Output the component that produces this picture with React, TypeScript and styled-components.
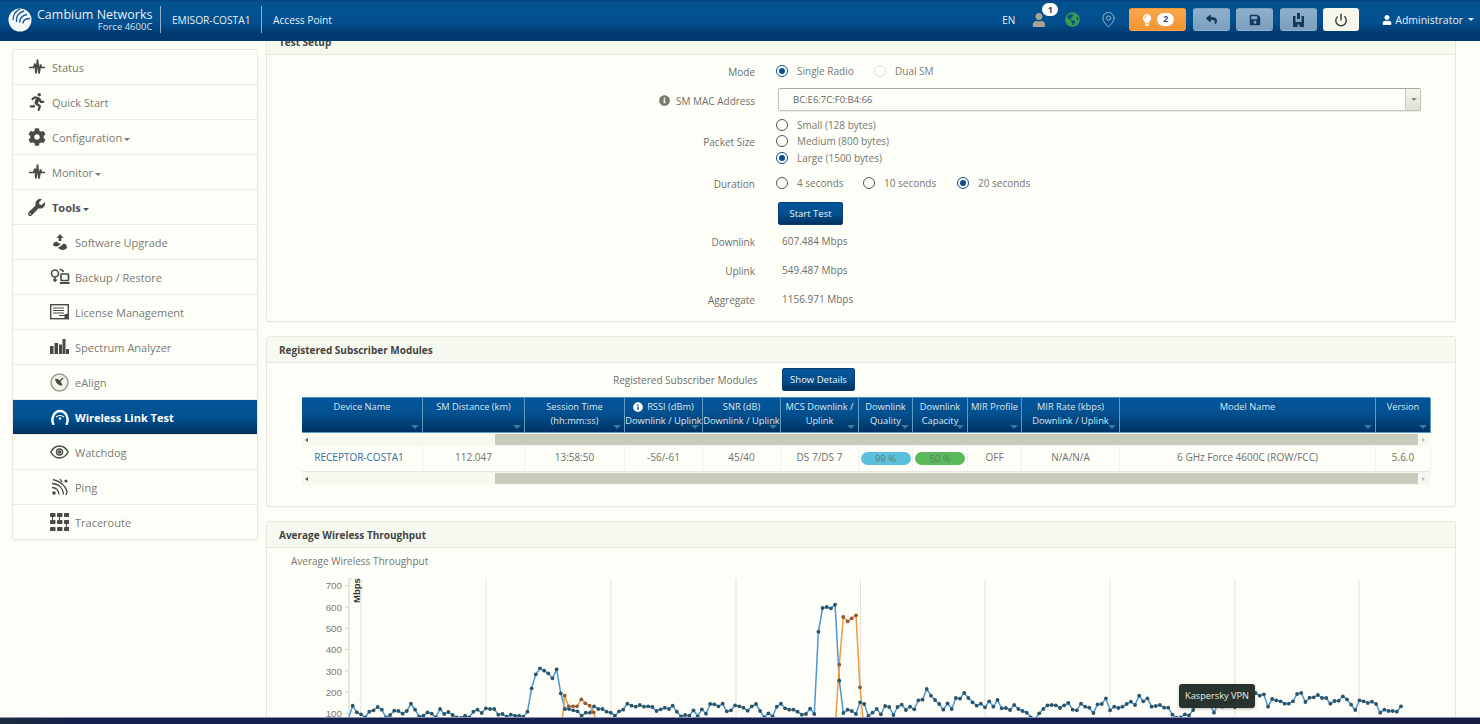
import React from "react";
import styled, { createGlobalStyle } from "styled-components";
import { FaCog, FaWrench, FaRunning, FaGlobeAmericas, FaLightbulb, FaReply, FaSave, FaUser, FaInfoCircle } from "react-icons/fa";
import { MapPin, Power } from "lucide-react";

const Global = createGlobalStyle`
  html, body { margin: 0; padding: 0; height: 724px; overflow: hidden; background: #fefef8; }
  * { box-sizing: border-box; }
  body { font-family: "Open Sans", "Liberation Sans", sans-serif; color: #6f6f6a; }
`;

const Page = styled.div`
  position: relative; width: 1480px; height: 724px; display: flex; flex-direction: column; overflow: hidden;
`;
const Header = styled.header`
  position: relative; z-index: 2; height: 41px; flex: none; display: flex; align-items: center; padding: 0 6px 2px 8px;
  background: linear-gradient(#003f7c 0, #02528f 2px, #03508f 22px, #003d74 32px, #003a6e 100%);
  color: #e6eef4;
`;
const Brand = styled.div`display: flex; align-items: center; gap: 5px;`;
const BrandText = styled.div`display: flex; flex-direction: column; align-items: flex-end; padding-top: 1px;`;
const BrandName = styled.div`font-size: 12.5px; line-height: 13px; color: #e8eef4; white-space: nowrap;`;
const BrandModel = styled.div`font-size: 9.5px; line-height: 11px; color: #d6e2ec; white-space: nowrap;`;
const HeadDivider = styled.div`width: 1px; height: 27px; background: #8fb0cb; margin: 0 10.5px 0 8px;`;
const HeadLabel = styled.div`font-size: 10.2px; font-weight: 500; white-space: nowrap; padding-right: 3px;`;
const HeadRight = styled.div`margin-left: auto; display: flex; align-items: center;`;
const Lang = styled.div`font-size: 10px; margin-right: 17px;`;
const IconSlot = styled.div<{ $w: number; $mr: number; $c: string }>`
  position: relative; width: ${p => p.$w}px; margin-right: ${p => p.$mr}px; color: ${p => p.$c};
  display: flex; align-items: center; justify-content: center; height: 20px;
  svg { flex: none; }
`;
const Badge = styled.span`
  position: absolute; left: 10px; top: -7px; width: 16px; height: 13px; border-radius: 7px; background: #fff;
  color: #24456a; font-size: 9px; font-weight: 700; line-height: 13px; text-align: center;
`;
const HeadButton = styled.button<{ $kind: "orange" | "steel" | "white" }>`
  height: 23px; width: ${p => (p.$kind === "orange" ? 57 : p.$kind === "white" ? 36 : 37)}px;
  margin-right: ${p => (p.$kind === "white" ? 23 : 6.5)}px; padding: 0; border: 1px solid transparent; border-radius: 3px;
  display: flex; align-items: center; justify-content: center; gap: 4px;
  background: ${p => (p.$kind === "orange" ? "linear-gradient(#f9a84b,#f39534)" : p.$kind === "white" ? "#f7f6ec" : "linear-gradient(#8fb0cc,#7c9fbf)")};
  color: ${p => (p.$kind === "orange" ? "#fff" : p.$kind === "white" ? "#3a3a36" : "#123a5e")};
`;
const CountPill = styled.span`
  width: 17px; height: 13px; border-radius: 7px; background: #fff; color: #24456a; font-size: 9px; font-weight: 700; line-height: 13px; text-align: center;
`;
const UserMenu = styled.div`display: flex; align-items: center; gap: 3px; font-size: 10.5px; color: #e6eef4;`;
const Caret = styled.i<{ $c?: string }>`
  display: inline-block; width: 0; height: 0; margin-left: 2px; vertical-align: middle;
  border-left: 3px solid transparent; border-right: 3px solid transparent; border-top: 3px solid ${p => p.$c || "currentColor"};
`;

const Body = styled.div`flex: 1; min-height: 0; display: flex; overflow: hidden; align-items: flex-start;`;
const Sidebar = styled.nav`
  flex: none; width: 246px; margin: 8px 0 0 12px; border: 1px solid #e8e8de; border-radius: 3px; background: #fefef8;
  box-shadow: 0 1px 2px rgba(0,0,0,.05);
`;
const NavRow = styled.div<{ $sub?: boolean; $active?: boolean; $bold?: boolean }>`
  height: 35px; display: flex; align-items: center; gap: 5px;
  padding-left: ${p => (p.$sub ? 36 : 13)}px; border-bottom: 1px solid #eaeae0;
  background: ${p => (p.$active ? "linear-gradient(#03559c 0,#03508f 55%,#00305f 100%)" : "transparent")};
  color: ${p => (p.$active ? "#fff" : p.$bold ? "#4c4c56" : "#7a7a74")};
  font-size: 11px; font-weight: ${p => (p.$active || p.$bold ? 700 : 400)};
  &:last-child { border-bottom: none; height: 34px; }
`;
const NavIcon = styled.span<{ $active?: boolean }>`
  width: 21px; height: 20px; flex: none; display: flex; align-items: center; justify-content: center;
  color: ${p => (p.$active ? "#fff" : "#4a4a45")};
  svg { display: block; }
`;
const NavText = styled.span`padding-top: 1px; white-space: nowrap;`;

const Main = styled.main`flex: none; width: 1190px; margin: -13px 0 0 8px;`;
const Panel = styled.section`
  border: 1px solid #e8e8de; border-radius: 3px; margin-bottom: 14px; background: #fefef8; box-shadow: 0 1px 1px rgba(0,0,0,.03);
`;
const PanelHead = styled.h3`
  margin: 0; height: 26px; padding: 0 12px; background: #f6f9ef; border-bottom: 1px solid #e8e8de;
  font-size: 10px; font-weight: 700; line-height: 27px; color: #444;
`;
const FormBody = styled.div`padding-bottom: 8px;`;
const FormRow = styled.div<{ $h: number }>`
  height: ${p => p.$h}px; display: grid; grid-template-columns: 488px 1fr; column-gap: 21px; align-items: center;
`;
const FormLabel = styled.div`
  display: flex; justify-content: flex-end; align-items: center; gap: 6px; font-size: 10px; color: #6f6f6a; padding-top: 2px; white-space: nowrap;
`;
const InlineRadios = styled.div`display: flex; align-items: center;`;
const StackRadios = styled.div`display: flex; flex-direction: column; gap: 0;`;
const RadioWrap = styled.label<{ $w?: number; $muted?: boolean }>`
  display: flex; align-items: center; height: 16.5px; font-size: 10px; white-space: nowrap; width: ${p => (p.$w ? `${p.$w}px` : "auto")};
  color: ${p => (p.$muted ? "#7c7c78" : "#777772")};
`;
const Radio = styled.span<{ $on?: boolean; $off?: boolean }>`
  width: 12px; height: 12px; flex: none; border-radius: 50%; margin-right: 9px; background: #fefef8;
  border: 1.5px solid ${p => (p.$off ? "#dfdfd8" : p.$on ? "#0a4f8f" : "#555")};
  display: flex; align-items: center; justify-content: center;
  &::after { content: ""; width: 6px; height: 6px; border-radius: 50%; background: ${p => (p.$on ? "#0a4f8f" : "transparent")}; }
`;
const Select = styled.div`
  width: 643px; height: 23px; margin-left: 2px; display: flex; align-items: center; justify-content: space-between; font-size: 9.5px; color: #66665f;
  border: 1px solid #c4c4ba; border-top-color: #a8a8a0; border-radius: 2px; padding-left: 14px; box-shadow: 0 1px 1px rgba(0,0,0,.08);
`;
const SelectArrow = styled.div`
  width: 15px; height: 100%; border-left: 1px solid #ccc; background: linear-gradient(#f5f5ec,#dedfd4); display: flex; align-items: center; justify-content: center; color: #888;
`;
const PrimaryButton = styled.button<{ $w: number }>`
  width: ${p => p.$w}px; height: 23px; padding: 0; border: 1px solid #0a3e70; border-radius: 2px; flex: none;
  background: linear-gradient(#04569c 0,#03508f 50%,#00305f 100%); color: #eef3f8; font: 500 9.5px "Open Sans", sans-serif;
`;
const ButtonCell = styled.div`display: flex; align-self: start; padding: 5px 0 0 2px;`;
const MetricValue = styled.div`font-size: 10px; color: #6f6f6a; padding-left: 6px;`;

const TableBody = styled.div`padding: 5px 25px 21px 35px;`;
const TableCaption = styled.div`
  display: flex; align-items: center; justify-content: flex-start; height: 23px; margin-bottom: 6px; padding-left: 311px; font-size: 10px; color: #6f6f6a;
`;
const CaptionText = styled.span`width: 169px; white-space: nowrap;`;
const COLS = "121px 102px 100px 78px 78px 78px 54px 55px 54px 98px 256px 55px";
const HeadGrid = styled.div`
  display: grid; grid-template-columns: ${COLS}; height: 36px; background: linear-gradient(#03559c 0,#03508f 45%,#003060 100%);
  border-top: 1px solid #4f95bf;
`;
const HeadCell = styled.div`
  position: relative; padding-top: 2px; text-align: center; font-size: 9.3px; line-height: 14px; color: #dce7ef; white-space: nowrap;
  border-right: 1px solid #5d9bc3; border-bottom: 1px solid #5d9bc3;
  &::after {
    content: ""; position: absolute; right: 3px; bottom: 3px; width: 0; height: 0;
    border-left: 4px solid transparent; border-right: 4px solid transparent; border-top: 4px solid #3c78a6;
  }
  svg { vertical-align: -1.5px; margin-right: 4px; }
`;
const ScrollBar = styled.div`height: 13px; display: flex; background: #f6f9ef;`;
const ScrollEnd = styled.div<{ $w: number; $right?: boolean }>`
  width: ${p => p.$w}px; flex: none; display: flex; align-items: center; padding-left: ${p => (p.$right ? 4 : 3)}px; 
  &::before {
    content: ""; width: 0; height: 0; border-top: 2.5px solid transparent; border-bottom: 2.5px solid transparent;
    ${p => (p.$right ? "border-left: 3px solid #bbb;" : "border-right: 3px solid #555;")}
  }
`;
const ScrollThumb = styled.div`flex: 1; margin: 1px 0; background: #c8cabb;`;
const DataGrid = styled.div`
  display: grid; grid-template-columns: ${COLS}; height: 26px; border-bottom: 1px solid #e8e8de;
`;
const DataCell = styled.div<{ $link?: boolean }>`
  display: flex; align-items: center; justify-content: center; font-size: 10px; color: ${p => (p.$link ? "#2f6d9e" : "#6f6f6a")}; white-space: nowrap;
  border-right: 1px dotted #e6e6dc; padding: 0 ${p => (p.$link ? 6 : 0)}px 3px 0;
`;
const Pill = styled.span<{ $c: string }>`
  width: 50px; height: 13px; border-radius: 7px; background: ${p => p.$c}; color: #5d7a70; font-size: 9.5px; line-height: 13px; text-align: center; margin-top: 3px;
`;
const ChartBody = styled.div`overflow: hidden;`;
const ChartTitle = styled.div`height: 26px; padding: 1px 0 0 24px; font-size: 10px; line-height: 25px; color: #777772;`;
const ChartSvg = styled.svg`display: block; font-family: "Liberation Sans", Arial, sans-serif;`;

const Taskbar = styled.div`
  position: relative; z-index: 3; flex: none; height: 7px; border-top: 1px solid #8f8fb0;
  background: linear-gradient(90deg,#1c2c3a 0,#14204e 5%,#14204e 80%,#1a1c44 100%);
`;
const Tooltip = styled.div`
  position: absolute; z-index: 4; left: 1179px; top: 684px; width: 76px; height: 24px; border-radius: 3px; background: #28332f;
  color: #e8ebe4; font-size: 9.2px; line-height: 24px; text-align: center; white-space: nowrap; box-shadow: 0 1px 3px rgba(0,0,0,.25);
`;

const Pulse = ({ s = 16 }: { s?: number }) => (
  <svg width={s} height={s} viewBox="0 0 16 16" fill="none" stroke="currentColor" strokeWidth="1.7">
    <path d="M0 8.500h4.500L6 4.500l1 10L8.500 .5l1.500 14 1.500-9 1 3H16" />
  </svg>
);
const Upgrade = () => (
  <svg width="16" height="17" viewBox="0 0 16 17" fill="currentColor">
    <path d="M8 0l3.500 4H9.300v3H6.700V4H4.500z" />
    <path d="M5 7.500c-2 .4-4 1.500-4 3 0 1.200 1.500 2 3 2 2.500 0 3-1.500 5-2.500-1.500-.6-3.500-.6-4-2.500zM15 13c0-1.600-1.500-3-3-3.500-2.500 1-3 3.500-6 4 1 1.500 2.500 2.500 4.500 2.500 2.300 0 4.500-1 4.500-3z" />
  </svg>
);
const Backup = () => (
  <svg width="20" height="18" viewBox="0 0 20 18" fill="none" stroke="currentColor" strokeWidth="1.6">
    <circle cx="5" cy="5.500" r="3.500" /><path d="M5 9v5M3 12h4" />
    <rect x="11" y="6" width="7.500" height="6.500" rx=".5" /><path d="M10 15h9.500" strokeWidth="2" />
    <path d="M9.500 1.500c2 0 3.500 1 4 2.500" />
  </svg>
);
const License = () => (
  <svg width="19" height="16" viewBox="0 0 19 16" fill="none" stroke="currentColor">
    <rect x=".7" y=".7" width="17.600" height="14" strokeWidth="1.400" />
    <path d="M3 4h11M3 6.500h11M3 9h11M9 11.500h6" strokeWidth="1.200" />
    <path d="M15 10.500h3v4h-3z" fill="currentColor" />
  </svg>
);
const Bars = () => (
  <svg width="19" height="16" viewBox="0 0 19 16" fill="currentColor">
    <rect x="0" y="7" width="3.500" height="8" /><rect x="4.500" y="4" width="3.500" height="11" />
    <rect x="9" y="5.500" width="3" height="9.500" /><rect x="12.500" y="0" width="3" height="15" /><rect x="16" y="10" width="3" height="5" />
  </svg>
);
const EAlign = () => (
  <svg width="19" height="19" viewBox="0 0 19 19">
    <circle cx="9.500" cy="9.500" r="8.500" fill="#f2f2ea" stroke="#9a9a92" strokeWidth="1.500" />
    <path d="M5 6c3-1 6 2 7.500 6.500C9 13 5.500 10 5 6z" fill="#4a4a45" />
    <path d="M10 8l3-3" stroke="#4a4a45" strokeWidth="1.300" />
  </svg>
);
const Gauge = () => (
  <svg width="20" height="16" viewBox="0 0 20 16" fill="none" stroke="currentColor" strokeWidth="2.400">
    <path d="M3.300 15C1 10.500 3.500 2 10 2s9 8.500 6.700 13" strokeLinecap="round" />
    <path d="M6 8c2-2 6-2 8 0" strokeWidth="1.200" />
    <circle cx="10" cy="9.500" r="1.300" fill="currentColor" stroke="none" />
  </svg>
);
const Eye = () => (
  <svg width="19" height="14" viewBox="0 0 19 14" fill="none" stroke="currentColor" strokeWidth="1.400">
    <path d="M.8 7C3 3 6 1 9.500 1s6.500 2 8.700 6c-2.200 4-5.200 6-8.700 6S3 11 .8 7z" />
    <circle cx="9.500" cy="7" r="3" /><circle cx="9.500" cy="7" r="1" fill="currentColor" />
  </svg>
);
const Ping = () => (
  <svg width="18" height="18" viewBox="0 0 18 18" fill="none" stroke="currentColor" strokeWidth="1.300">
    <circle cx="3" cy="15" r="1.800" fill="currentColor" stroke="none" />
    <path d="M1 9.500c3.500 0 6.500 2.500 7 7M1 5.500c6 0 11 4 11.500 11M2 1.500c6 1.500 12 5 14 12l-1 3.500" />
    <circle cx="15" cy="3" r="1.600" fill="currentColor" stroke="none" />
    <path d="M9 1l2 3" />
  </svg>
);
const Trace = () => (
  <svg width="19" height="18" viewBox="0 0 19 18" fill="currentColor">
    {[0, 1, 2].flatMap(r => [0, 1, 2].map(c => <rect key={`${r}${c}`} x={c * 7} y={r * 7} width="5.500" height="4" rx=".8" />))}
    <path d="M2 4h1v3H2zM9 4h1v3H9zM16 11h1v3h-1z" />
  </svg>
);
const Logo = () => (
  <svg width="24" height="24" viewBox="0 0 24 24" fill="none">
    <circle cx="12" cy="12" r="11.500" fill="#f4f7f9" />
    <path d="M5 12C5 7 8 3 12 1M8.500 14C7.500 9 10.500 4.500 16 3M12 14.500c-1-3 1.500-7 7-8M15 15.500c0-2.500 2-5 7-5" stroke="#0a5596" strokeWidth="1.300" />
  </svg>
);
const Pillar = () => (
  <svg width="13" height="14" viewBox="0 0 13 14" fill="currentColor">
    <path d="M5 0h3v6H5zM1 3h2.500v11H1zM9.500 3H12v11H9.500zM3.500 9h6v5h-2v-2.500h-2V14h-2z" />
  </svg>
);

type NavItem = { label: string; icon: React.ReactNode; sub?: boolean; caret?: boolean; bold?: boolean; active?: boolean };
const nav: NavItem[] = [
  { label: "Status", icon: <Pulse /> },
  { label: "Quick Start", icon: <FaRunning size={18} /> },
  { label: "Configuration", icon: <FaCog size={18} />, caret: true },
  { label: "Monitor", icon: <Pulse />, caret: true },
  { label: "Tools", icon: <FaWrench size={17} />, caret: true, bold: true },
  { label: "Software Upgrade", icon: <Upgrade />, sub: true },
  { label: "Backup / Restore", icon: <Backup />, sub: true },
  { label: "License Management", icon: <License />, sub: true },
  { label: "Spectrum Analyzer", icon: <Bars />, sub: true },
  { label: "eAlign", icon: <EAlign />, sub: true },
  { label: "Wireless Link Test", icon: <Gauge />, sub: true, active: true },
  { label: "Watchdog", icon: <Eye />, sub: true },
  { label: "Ping", icon: <Ping />, sub: true },
  { label: "Traceroute", icon: <Trace />, sub: true },
];

const headers: React.ReactNode[][] = [
  ["Device Name"], ["SM Distance (km)"], ["Session Time", "(hh:mm:ss)"],
  [<><FaInfoCircle size={10} color="#fff" />RSSI (dBm)</>, "Downlink / Uplink"], ["SNR (dB)", "Downlink / Uplink"],
  ["MCS Downlink /", "Uplink"], ["Downlink", "Quality"], ["Downlink", "Capacity"], ["MIR Profile"],
  ["MIR Rate (kbps)", "Downlink / Uplink"], ["Model Name"], ["Version"],
];

// Chart data: screen-space samples read from the plot, one list per stretch of the x axis.
const stretch = (x0: number, x1: number, base: number, ys: number[]) =>
  ys.map((y, i) => [x0 + ((x1 - x0) * i) / (ys.length - 1), base + y / 3] as [number, number]);

const blue: [number, number][] = [
  [349, 718],
  ...stretch(270 + 248 / 3, 270 + 1197 / 3, 550, [470,490,496,505,488,484,474,482,505,498,485,486,494,486,464,482,503,500,490,494,505,480,495,489,498,505,507,500,505,488,482,492,478,480,480,497,495,503,497,500,500,503,488,418,376,358,365,373,388,361,433,480,480,484,487,500,491,491,472,480,480,488,491,500,487,482,464,470,473,468,473,472,474,486,481,476,480]),
  ...stretch(670 + 8 / 3, 670 + 1195 / 3, 570, [410,428,442,438,440,424,442,421,434,405,406,412,404,427,424,409,412,416,425,412,405,426,445,433,442,413,404,418,422,422,428,437,435,419,435,188,117,114,118,107,335,432,422,426,435,400,405,441,431,420,436,411,414,438,414,407,423,413,421,394,392,360,380,393,405,422,403,420,387,389,372,387,400,410,404,415,397,413,393,418,417,423,408,420,426,431,445,450,433,420,409,408,409,417,409,402]),
  ...stretch(1070 + 8 / 3, 1070 + 993 / 3, 570, [422,424,404,413,416,432,406,405,388,424,413,417,413,405,398,408,380,397,388,413,411,408,416,416,437,447,445,436,439,423,400,390,395,405,431,405,413,405,400,414,410,412,410,395,372,380,376,413,390,394,397,404,404,397,375,372,399,386,385,378,387,387,404,396,395,382,391,407,423,394,397,402,398,405,431,422,426,426,428,412]),
];
const orangeA: [number, number][] = [
  [562.3, 720], [564.7, 696.7], [568.7, 707.3], [573, 707.3], [577, 707.3], [581.3, 700.3], [585.3, 704.3], [589.7, 706.7], [593.7, 713.3], [596, 722],
];
const orangeB: [number, number][] = [
  [835.7, 720], [839.3, 665.7], [843.3, 618], [847.7, 622.3], [851.7, 619.3], [856, 616.3], [860, 688.3], [863, 720],
];
const dotsOnly = (pts: [number, number][]) => pts.slice(1, -1);
const toPath = (pts: [number, number][]) => pts.map(([x, y]) => `${x.toFixed(1)},${y.toFixed(1)}`).join(" ");

const yTicks = [700, 600, 500, 400, 300, 200, 100];
const grid = [361, 486, 611, 736, 860.5, 985, 1110, 1235, 1359];

const Chart = () => (
  <ChartSvg width="1188" height="145" viewBox="267 575 1188 145">
    {grid.map(x => <line key={x} x1={x} x2={x} y1="580" y2="720" stroke="#e4e4dc" strokeWidth="1" />)}
    <path d="M352 580h-3v140" fill="none" stroke="#d4d4cc" strokeWidth="1" />
    {yTicks.map((t, i) => (
      <g key={t}>
        <line x1="345" x2="349" y1={586.700 + i * 21.300} y2={586.700 + i * 21.300} stroke="#d4d4cc" />
        <text x="342" y={590.400 + i * 21.300} textAnchor="end" fontSize="9.800" fill="#7a7a7d">{t}</text>
      </g>
    ))}
    <text transform="translate(360 604) rotate(-90)" fontSize="9.500" fontWeight="700" fill="#333">Mbps</text>
    <polyline points={toPath(blue)} fill="none" stroke="#4a97cf" strokeWidth="1.500" />
    <polyline points={toPath(orangeA)} fill="none" stroke="#f09a3e" strokeWidth="1.500" />
    <polyline points={toPath(orangeB)} fill="none" stroke="#f09a3e" strokeWidth="1.500" />
    {blue.slice(1).map(([x, y], i) => <circle key={i} cx={x} cy={y} r="1.900" fill="#2c5468" />)}
    {[...dotsOnly(orangeA), ...dotsOnly(orangeB)].map(([x, y], i) => <circle key={i} cx={x} cy={y} r="1.900" fill="#8f5a35" />)}
  </ChartSvg>
);

export default function App() {
  return (
    <Page>
      <Global />
      <Header>
        <Brand>
          <Logo />
          <BrandText>
            <BrandName>Cambium Networks</BrandName>
            <BrandModel>Force 4600C</BrandModel>
          </BrandText>
        </Brand>
        <HeadDivider />
        <HeadLabel>EMISOR-COSTA1</HeadLabel>
        <HeadDivider />
        <HeadLabel>Access Point</HeadLabel>
        <HeadRight>
          <Lang>EN</Lang>
          <IconSlot $w={14} $mr={19} $c="#a8a48f"><FaUser size={14} /><Badge>1</Badge></IconSlot>
          <IconSlot $w={15} $mr={19.5} $c="#3f9a52"><FaGlobeAmericas size={15} /></IconSlot>
          <IconSlot $w={17} $mr={12.5} $c="#9ab4c6"><MapPin size={17} strokeWidth={1.400} /></IconSlot>
          <HeadButton $kind="orange"><FaLightbulb size={12} /><CountPill>2</CountPill></HeadButton>
          <HeadButton $kind="steel"><FaReply size={11} /></HeadButton>
          <HeadButton $kind="steel"><FaSave size={12} /></HeadButton>
          <HeadButton $kind="steel"><Pillar /></HeadButton>
          <HeadButton $kind="white"><Power size={14} strokeWidth={2.400} /></HeadButton>
          <UserMenu><FaUser size={10} color="#fff" />Administrator<Caret /></UserMenu>
        </HeadRight>
      </Header>
      <Body>
        <Sidebar>
          {nav.map(n => (
            <NavRow key={n.label} $sub={n.sub} $active={n.active} $bold={n.bold}>
              <NavIcon $active={n.active}>{n.icon}</NavIcon>
              <NavText>{n.label}{n.caret && <Caret />}</NavText>
            </NavRow>
          ))}
        </Sidebar>
        <Main>
          <Panel>
            <PanelHead>Test Setup</PanelHead>
            <FormBody>
              <FormRow $h={31}>
                <FormLabel>Mode</FormLabel>
                <InlineRadios>
                  <RadioWrap $w={98}><Radio $on />Single Radio</RadioWrap>
                  <RadioWrap $muted><Radio $off />Dual SM</RadioWrap>
                </InlineRadios>
              </FormRow>
              <FormRow $h={27}>
                <FormLabel><FaInfoCircle size={11} color="#77776f" />SM MAC Address</FormLabel>
                <Select>BC:E6:7C:F0:B4:66<SelectArrow><Caret /></SelectArrow></Select>
              </FormRow>
              <FormRow $h={56}>
                <FormLabel>Packet Size</FormLabel>
                <StackRadios>
                  <RadioWrap><Radio />Small (128 bytes)</RadioWrap>
                  <RadioWrap><Radio />Medium (800 bytes)</RadioWrap>
                  <RadioWrap><Radio $on />Large (1500 bytes)</RadioWrap>
                </StackRadios>
              </FormRow>
              <FormRow $h={28}>
                <FormLabel>Duration</FormLabel>
                <InlineRadios>
                  <RadioWrap $w={87}><Radio />4 seconds</RadioWrap>
                  <RadioWrap $w={94}><Radio />10 seconds</RadioWrap>
                  <RadioWrap><Radio $on />20 seconds</RadioWrap>
                </InlineRadios>
              </FormRow>
              <FormRow $h={29}>
                <div />
                <ButtonCell><PrimaryButton $w={65}>Start Test</PrimaryButton></ButtonCell>
              </FormRow>
              <FormRow $h={29}><FormLabel>Downlink</FormLabel><MetricValue>607.484 Mbps</MetricValue></FormRow>
              <FormRow $h={29}><FormLabel>Uplink</FormLabel><MetricValue>549.487 Mbps</MetricValue></FormRow>
              <FormRow $h={29}><FormLabel>Aggregate</FormLabel><MetricValue>1156.971 Mbps</MetricValue></FormRow>
            </FormBody>
          </Panel>
          <Panel>
            <PanelHead>Registered Subscriber Modules</PanelHead>
            <TableBody>
              <TableCaption>
                <CaptionText>Registered Subscriber Modules</CaptionText>
                <PrimaryButton $w={73}>Show Details</PrimaryButton>
              </TableCaption>
              <HeadGrid>
                {headers.map((h, i) => (
                  <HeadCell key={i}>{h.map((l, j) => <div key={j}>{l}</div>)}</HeadCell>
                ))}
              </HeadGrid>
              <ScrollBar><ScrollEnd $w={193} /><ScrollThumb /><ScrollEnd $w={12} $right /></ScrollBar>
              <DataGrid>
                <DataCell $link>RECEPTOR-COSTA1</DataCell>
                <DataCell>112.047</DataCell>
                <DataCell>13:58:50</DataCell>
                <DataCell>-56/-61</DataCell>
                <DataCell>45/40</DataCell>
                <DataCell>DS 7/DS 7</DataCell>
                <DataCell><Pill $c="#5bc0de">99 %</Pill></DataCell>
                <DataCell><Pill $c="#5cb85c">50 %</Pill></DataCell>
                <DataCell>OFF</DataCell>
                <DataCell>N/A/N/A</DataCell>
                <DataCell>6 GHz Force 4600C (ROW/FCC)</DataCell>
                <DataCell>5.6.0</DataCell>
              </DataGrid>
              <ScrollBar><ScrollEnd $w={193} /><ScrollThumb /><ScrollEnd $w={12} $right /></ScrollBar>
            </TableBody>
          </Panel>
          <Panel>
            <PanelHead>Average Wireless Throughput</PanelHead>
            <ChartBody>
              <ChartTitle>Average Wireless Throughput</ChartTitle>
              <Chart />
            </ChartBody>
          </Panel>
        </Main>
      </Body>
      <Taskbar />
      <Tooltip>Kaspersky VPN</Tooltip>
    </Page>
  );
}
